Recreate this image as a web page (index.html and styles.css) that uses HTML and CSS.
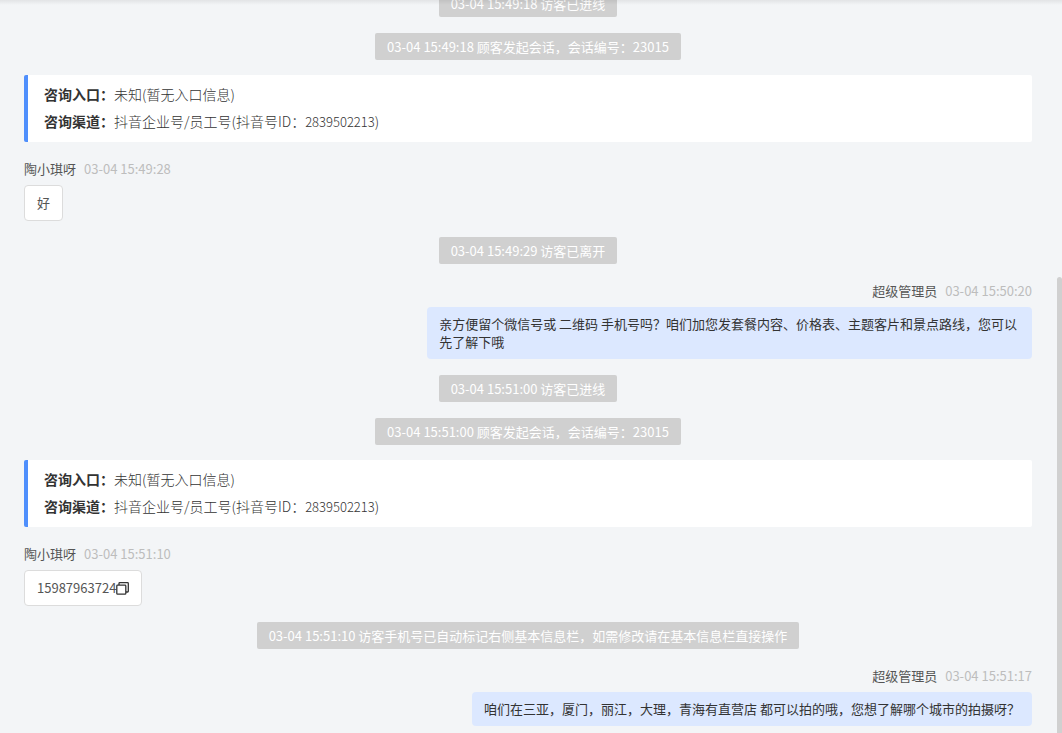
FILE: index.html
```html
<!DOCTYPE html>
<html lang="zh-CN">
<head>
    <meta charset="utf-8">
    <title>会话记录</title>
    <link rel="stylesheet" href="styles.css">
</head>
<body>
    <main class="chat">
        <div class="notice">03-04 15:49:18 访客已进线</div>
        <div class="notice">03-04 15:49:18 顾客发起会话，会话编号：23015</div>

        <div class="info">
            <div class="info_row"><b>咨询入口：</b>未知(暂无入口信息)</div>
            <div class="info_row"><b>咨询渠道：</b>抖音企业号/员工号(抖音号ID：<span class="info_id">2839502213</span>)</div>
        </div>

        <div class="message">
            <div class="message_head"><span>陶小琪呀</span><time>03-04 15:49:28</time></div>
            <div class="bubble">好</div>
        </div>

        <div class="notice">03-04 15:49:29 访客已离开</div>

        <div class="message mine">
            <div class="message_head"><span>超级管理员</span><time>03-04 15:50:20</time></div>
            <div class="bubble">亲方便留个微信号或 二维码 手机号吗？咱们加您发套餐内容、价格表、主题客片和景点路线，您可以先了解下哦</div>
        </div>

        <div class="notice">03-04 15:51:00 访客已进线</div>
        <div class="notice">03-04 15:51:00 顾客发起会话，会话编号：23015</div>

        <div class="info">
            <div class="info_row"><b>咨询入口：</b>未知(暂无入口信息)</div>
            <div class="info_row"><b>咨询渠道：</b>抖音企业号/员工号(抖音号ID：<span class="info_id">2839502213</span>)</div>
        </div>

        <div class="message">
            <div class="message_head"><span>陶小琪呀</span><time>03-04 15:51:10</time></div>
            <div class="bubble phone">
                <span>15987963724</span>
                <button class="copy" type="button" aria-label="复制">
                    <svg width="13" height="13" viewBox="0 0 13 13" fill="none" stroke="#333" stroke-width="1.3" stroke-linejoin="round">
                        <rect x="0.8" y="3.2" width="9" height="9" rx="0.8"/>
                        <path d="M3 3V1.4q0-.7.7-.7h7.9q.7 0 .7.7v7.9q0 .7-.7.7H10"/>
                    </svg>
                </button>
            </div>
        </div>

        <div class="notice">03-04 15:51:10 访客手机号已自动标记右侧基本信息栏，如需修改请在基本信息栏直接操作</div>

        <div class="message mine">
            <div class="message_head"><span>超级管理员</span><time>03-04 15:51:17</time></div>
            <div class="bubble">咱们在三亚，厦门，丽江，大理，青海有直营店 都可以拍的哦，您想了解哪个城市的拍摄呀？</div>
        </div>
    </main>
    <div class="top_shadow"></div>
    <div class="scroll_thumb"></div>
</body>
</html>
```
FILE: styles.css
```css
* {
    box-sizing: border-box;
}
body {
    margin: 0;
    background-color: #f3f5f7;
    color: #333;
    font-family: "Noto Sans CJK SC", sans-serif;
    font-size: 13px;
    line-height: 18px;
}
/* Newest message stays at the bottom, older ones run off the top */
.chat {
    display: flex;
    flex-direction: column;
    justify-content: flex-end;
    height: 100vh;
    padding: 0 30px 7px 24px;
    overflow: hidden;
}
.chat > * {
    flex-shrink: 0;
}
.notice {
    align-self: center;
    margin-top: 16px;
    padding: 5px 12px 4px;
    border-radius: 2px;
    background-color: #d0d0d0;
    color: #fff;
}
.info {
    margin-top: 15px;
    padding: 6px 16px 7px;
    border-left: 4px solid #4f8ffc;
    border-radius: 2px;
    background-color: #fff;
    font-size: 14px;
    font-weight: 300;
    line-height: 27px;
}
.info_row b {
    font-weight: 700;
}
.info_id {
    font-size: 13px;
}
.message {
    display: flex;
    flex-direction: column;
    align-items: flex-start;
    margin-top: 16px;
}
.message_head {
    display: flex;
    gap: 8px;
    margin-bottom: 5px;
    color: #555;
    line-height: 22px;
}
.message_head time {
    color: #bdbdbd;
}
.bubble {
    max-width: 60%;
    padding: 8px 12px;
    border: 1px solid #dcdcdc;
    border-radius: 4px;
    background-color: #fff;
    color: #555;
}
.mine {
    align-items: flex-end;
}
.mine .bubble {
    border: 0;
    background-color: #dce8ff;
    color: #333;
}
.phone {
    display: flex;
    align-items: center;
}
.copy {
    display: flex;
    padding: 0;
    border: 0;
    background: none;
    cursor: pointer;
}
.top_shadow {
    position: absolute;
    top: 0;
    left: 0;
    right: 0;
    height: 5px;
    background: linear-gradient(rgba(0, 0, 0, 0.07), rgba(0, 0, 0, 0));
}
/* Drawn over the chat at the right edge */
.scroll_thumb {
    position: absolute;
    top: 277px;
    right: 0;
    bottom: 0;
    width: 5px;
    border-radius: 3px 3px 0 0;
    background-color: #d0d0d0;
}
```
